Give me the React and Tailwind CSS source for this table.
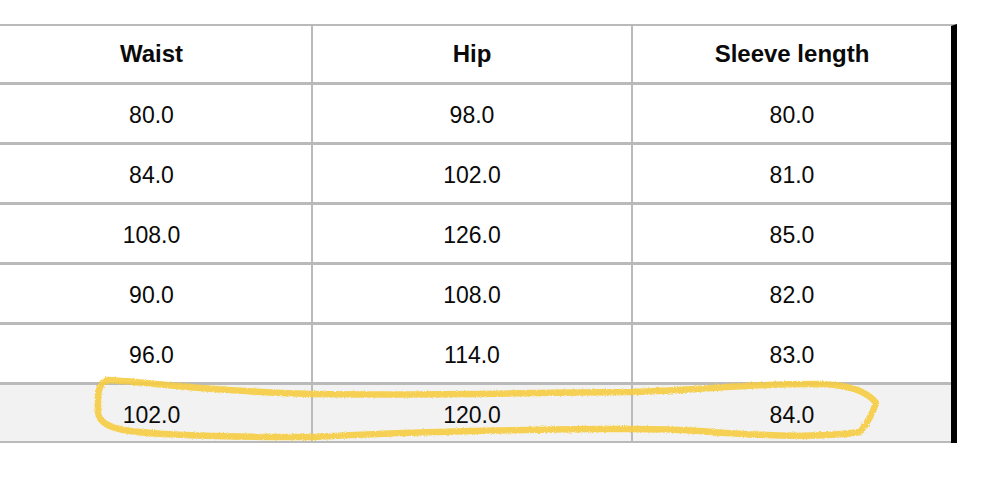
import React from "react";

const rows = [
  ["80.0", "98.0", "80.0"],
  ["84.0", "102.0", "81.0"],
  ["108.0", "126.0", "85.0"],
  ["90.0", "108.0", "82.0"],
  ["96.0", "114.0", "83.0"],
];

function Row({ cells, bold, className }) {
  const txt = bold
    ? "text-[24px] font-bold"
    : "text-[23px] font-normal pt-[4px]";
  return (
    <div className={"flex " + className}>
      <div className={"w-[321px] border-r-2 border-[#bababa] flex items-center justify-center " + txt}>
        {cells[0]}
      </div>
      <div className={"w-[320px] border-r-2 border-[#bababa] flex items-center justify-center " + txt}>
        {cells[1]}
      </div>
      <div className={"w-[318px] flex items-center justify-center " + txt}>
        {cells[2]}
      </div>
    </div>
  );
}

export default function App() {
  return (
    <div
      className="relative w-[986px] h-[480px] bg-white overflow-hidden text-[#0a0a0a]"
      style={{ fontFamily: '"Liberation Sans", Arial, sans-serif' }}
    >
      <div className="pt-[24px] ml-[-8px]">
        <div className="w-[965px] border-t-2 border-[#bababa] border-r-[6px] border-r-black">
          <Row cells={["Waist", "Hip", "Sleeve length"]} bold className="h-[56px]" />
          {rows.map((r, i) => (
            <Row key={i} cells={r} className="h-[60px] border-t-[3px] border-[#bababa]" />
          ))}
          <Row
            cells={["102.0", "120.0", "84.0"]}
            className="h-[61px] border-t-[3px] border-b-2 border-[#bababa] bg-[#f2f2f2]"
          />
        </div>
      </div>
      <svg
        className="absolute left-0 top-0 pointer-events-none"
        width="986"
        height="480"
        viewBox="0 0 986 480"
      >
        <defs>
          <filter id="rough" x="-5%" y="-20%" width="110%" height="140%">
            <feTurbulence type="fractalNoise" baseFrequency="0.9" numOctaves="2" seed="3" result="n" />
            <feDisplacementMap in="SourceGraphic" in2="n" scale="3" />
          </filter>
        </defs>
        <path
          d="M108,380 C150,382 200,391 312,394 C450,396 550,392 632,392 C700,390 760,383 820,384 C850,385 868,392 876,403 C872,415 866,425 860,432 C820,438 760,436 700,431 C660,428 640,429 600,429 C500,430 400,432 312,437 C230,437 160,435 130,431 C108,428 99,422 98,412 L98,396 C99,386 102,381 108,380 Z"
          fill="none"
          stroke="#f6cd42"
          strokeWidth="6.5"
          strokeLinejoin="round"
          opacity="0.9"
          filter="url(#rough)"
        />
      </svg>
    </div>
  );
}
